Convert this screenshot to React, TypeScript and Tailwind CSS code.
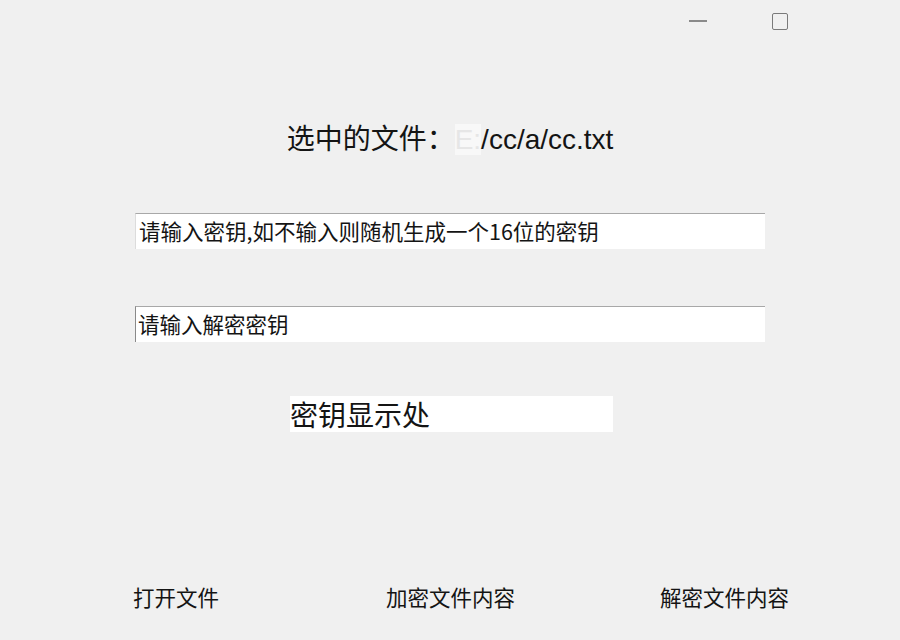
import React from "react";

const cjk = { fontFamily: '"Noto Sans CJK SC", "Liberation Sans", sans-serif' };
const mixed = { fontFamily: '"Liberation Sans", "Noto Sans CJK SC", sans-serif' };

export default function App() {
  return (
    <div className="w-[900px] h-[640px] bg-[#f0f0f0] flex flex-col text-[#141414] overflow-hidden" style={cjk}>
      {/* title bar */}
      <div className="h-[45px] flex items-start justify-end pr-[112px] gap-[65px]">
        <div className="mt-[20px] w-[18px] h-[1.5px] bg-[#8a8a8a]" />
        <div className="mt-[13px] w-[16px] h-[17px] border-[1.5px] border-[#7a7a7a] rounded-[2px]" />
      </div>

      {/* selected file */}
      <div className="mt-[77px] h-[36px] leading-[36px] text-[28px] text-center whitespace-nowrap" style={mixed}>
        选中的文件：<span className="text-[#e6e6e6] bg-[#f8f8f8]">E:</span>/cc/a/cc.txt
      </div>

      {/* encryption key input */}
      <div className="mt-[55px] ml-[135px] w-[630px] h-[36px] bg-white border-t border-t-[#a8a8a8] border-l border-l-[#dcdcdc] pl-[3px] text-[21.5px] leading-[34px] whitespace-nowrap">
        请输入密钥,如不输入则随机生成一个16位的密钥
      </div>

      {/* decryption key input */}
      <div className="mt-[57px] ml-[135px] w-[630px] h-[36px] bg-white border-t border-t-[#a8a8a8] border-l border-l-[#8a8a8a] pl-[2px] text-[21.5px] leading-[34px] whitespace-nowrap">
        请输入解密密钥
      </div>

      {/* key display */}
      <div className="mt-[54px] ml-[290px] w-[323px] h-[36px] bg-white text-[28px] leading-[36px] whitespace-nowrap">
        密钥显示处
      </div>

      {/* buttons */}
      <div className="mt-[150px] h-[30px] flex items-center text-[21.5px] leading-[30px] whitespace-nowrap">
        <div className="ml-[133px] w-[86px]">打开文件</div>
        <div className="ml-[167px] w-[129px]">加密文件内容</div>
        <div className="ml-[145px] w-[130px]">解密文件内容</div>
      </div>
    </div>
  );
}
